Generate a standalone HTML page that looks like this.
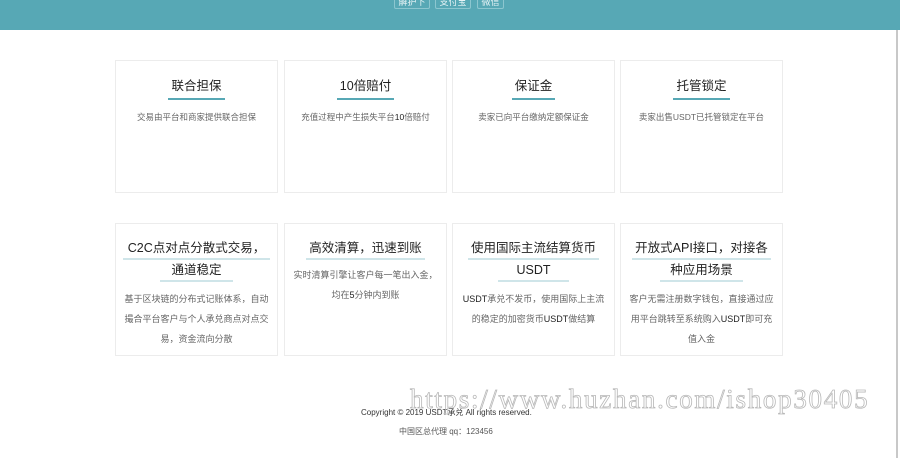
<!DOCTYPE html>
<html><head><meta charset="utf-8"><style>
*{margin:0;padding:0;box-sizing:border-box}
body{width:900px;height:458px;background:#fff;font-family:"Liberation Sans","Noto Sans CJK SC",sans-serif;position:relative;overflow:hidden}
.hdr{position:absolute;left:0;top:0;width:900px;height:30px;background:#57a8b5}
.btn{position:absolute;top:-4px;height:13px;border:1px solid #8cc6cf;border-radius:2px;color:#e8f4f6;font-size:9px;line-height:11px;text-align:center}
.card{position:absolute;width:163px;height:133px;border:1px solid #ececec;text-align:center}
.t{display:inline-block;font-size:12.5px;color:#222;line-height:20px;padding:0 3px 2px;border-bottom:2px solid #57a8b5}
.t2{display:inline-block;font-size:12.5px;color:#222;line-height:20px;padding:0 3px 0;border-bottom:2px solid #cfe5e9}
.d{font-size:8.5px;color:#666;line-height:20px;padding:0 8px}
.d2{font-size:9px}
.d b{color:#222;font-weight:normal}
.sb{position:absolute;left:896px;top:30px;width:2px;height:428px;background:#c8c8c8}
.wm{position:absolute;left:410px;top:384px;font-family:"Liberation Serif",serif;font-size:27px;color:transparent;-webkit-text-stroke:0.8px #b8b8b8;letter-spacing:1.7px;white-space:nowrap}
</style></head><body>
<div class="hdr">
<div class="btn" style="left:394px;width:36px">解护下</div>
<div class="btn" style="left:435px;width:36px">支付宝</div>
<div class="btn" style="left:477px;width:27px">微信</div>
</div>
<div class="card" style="left:115px;top:60px"><div style="margin-top:15px"><span class="t">联合担保</span></div><div class="d" style="margin-top:7px">交易由平台和商家提供联合担保</div></div>
<div class="card" style="left:284px;top:60px"><div style="margin-top:15px"><span class="t">10倍赔付</span></div><div class="d" style="margin-top:7px">充值过程中产生损失平台<b>10</b>倍赔付</div></div>
<div class="card" style="left:452px;top:60px"><div style="margin-top:15px"><span class="t">保证金</span></div><div class="d" style="margin-top:7px">卖家已向平台缴纳定额保证金</div></div>
<div class="card" style="left:620px;top:60px"><div style="margin-top:15px"><span class="t">托管锁定</span></div><div class="d" style="margin-top:7px">卖家出售USDT已托管锁定在平台</div></div>

<div class="card" style="left:115px;top:223px"><div style="margin-top:14px"><span class="t2" style="padding:0 5px">C2C点对点分散式交易，</span><br><span class="t2" style="padding:0 11px">通道稳定</span></div><div class="d d2" style="margin-top:7px">基于区块链的分布式记账体系，自动撮合平台客户与个人承兑商点对点交易，资金流向分散</div></div>
<div class="card" style="left:284px;top:223px"><div style="margin-top:14px"><span class="t2">高效清算，迅速到账</span></div><div class="d d2" style="margin-top:5px;padding:0 8px">实时清算引擎让客户每一笔出入金，<br>均在<b>5</b>分钟内到账</div></div>
<div class="card" style="left:452px;top:223px"><div style="margin-top:14px"><span class="t2">使用国际主流结算货币</span><br><span class="t2" style="padding:0 18px">USDT</span></div><div class="d d2" style="margin-top:7px;padding:0 6px"><b>USDT</b>承兑不发币，使用国际上主流的稳定的加密货币<b>USDT</b>做结算</div></div>
<div class="card" style="left:620px;top:223px"><div style="margin-top:14px"><span class="t2">开放式API接口，对接各</span><br><span class="t2" style="padding:0 10px">种应用场景</span></div><div class="d d2" style="margin-top:7px">客户无需注册数字钱包，直接通过应用平台跳转至系统购入<b>USDT</b>即可充值入金</div></div>

<div style="position:absolute;left:361px;top:407px;font-size:8px;color:#333">Copyright © 2019 USDT承兑 All rights reserved.</div>
<div style="position:absolute;left:399px;top:426px;font-size:8px;color:#555">中国区总代理 qq：123456</div>
<div class="wm">https://www.huzhan.com/ishop30405</div>
<div class="sb"></div>
</body></html>
